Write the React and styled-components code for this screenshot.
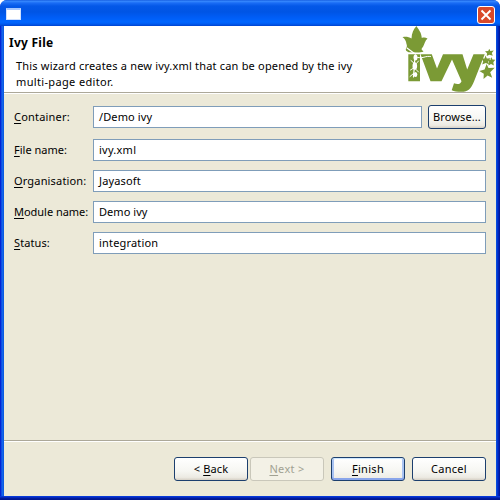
import React from "react";
import styled, { createGlobalStyle, css } from "styled-components";

const Global = createGlobalStyle`
  * { box-sizing: border-box; }
  html, body { margin: 0; padding: 0; background: #fff; overflow: hidden; }
`;

const Window = styled.div`
  width: 500px;
  height: 500px;
  display: flex;
  flex-direction: column;
  overflow: hidden;
  border-radius: 7px 7px 0 0;
  background: linear-gradient(90deg, #0019cf 0, #0831d9 1px, #166aee 2px, #0855dd 4px, #0855dd 496px, #0441d8 497px, #0029c8 498px, #00138c 500px);
  font-family: "Noto Sans", "Liberation Sans", sans-serif;
  font-size: 11px;
  color: #000;
`;

const TitleBar = styled.header`
  height: 26px;
  flex: none;
  display: flex;
  justify-content: space-between;
  align-items: flex-start;
  padding: 6px 5px 0 6px;
  background: linear-gradient(180deg, #0a4fd8 0, #3a8cff 1px, #1a6cf5 3px, #0458e8 6px, #0055e5 12px, #005cf5 17px, #0066ff 22px, #005bf0 24px, #0043cf 26px);
`;

const AppIcon = styled.span`
  width: 15px;
  height: 12px;
  margin-top: 2px;
  background: #fff;
  border: 1px solid #cfe0ff;
  border-top: 2px solid #a8c8ff;
`;

const CloseButton = styled.button`
  display: flex;
  width: 18px;
  height: 18px;
  padding: 0;
  border: 0;
  background: none;
`;

const Body = styled.main`
  flex: 1;
  display: flex;
  flex-direction: column;
  margin: 0 4px;
  background: #ece9d8;
`;

const Header = styled.section`
  height: 67px;
  flex: none;
  display: flex;
  justify-content: space-between;
  background: #fff;
  border-bottom: 1px solid #aca899;
`;

const Heading = styled.div`
  padding: 8px 0 0 5px;
`;

const Title = styled.h1`
  margin: 0;
  font-size: 12px;
  line-height: 18px;
  font-weight: 700;
  letter-spacing: 0.25px;
`;

const Description = styled.p`
  margin: 6px 0 0 7px;
  line-height: 16px;
  white-space: pre;
`;

const Spaced = styled.span`
  letter-spacing: ${(p) => p.$ls || 0}px;
`;

const Key = styled.span`
  text-decoration: underline;
  text-underline-offset: 2px;
  text-decoration-thickness: 1px;
  text-decoration-skip-ink: none;
`;

const Form = styled.form`
  flex: 1;
  padding: 11px 10px 0;
  border-top: 1px solid #fff;
`;

const Row = styled.div`
  display: flex;
  align-items: center;
  height: ${(p) => (p.$tall ? 24 : 22)}px;
  margin-bottom: ${(p) => (p.$tall ? 10 : 9)}px;
`;

const Label = styled.label`
  width: 79px;
  flex: none;
  line-height: 20px;
  white-space: pre;
  letter-spacing: ${(p) => p.$ls || 0}px;
`;

const Field = styled.div`
  flex: 1;
  height: 22px;
  padding: 0 5px;
  line-height: 20px;
  background: #fff;
  border: 1px solid #7f9db9;
  letter-spacing: ${(p) => p.$ls || 0}px;
`;

const variants = {
  normal: css`
    border-color: #1c3f6e;
    background: linear-gradient(180deg, #fff 0, #f6f6f2 60%, #eceae2 88%, #d6d0c5 100%);
  `,
  primary: css`
    border-color: #1c3f6e;
    background: linear-gradient(180deg, #fff 0, #f6f6f2 60%, #eceae2 100%);
    box-shadow: inset 0 1px #cee7ff, inset 0 -2px #89a5ea, inset 2px 0 #a9c3f2, inset -2px 0 #a9c3f2;
  `,
  disabled: css`
    border-color: #c9c7ba;
    background: #f3f1e6;
    color: #a1a192;
  `,
};

const Button = styled.button`
  flex: none;
  width: ${(p) => p.$w || 74}px;
  height: 24px;
  margin-left: ${(p) => p.$gap || 0}px;
  padding: 0 0 1px;
  font: inherit;
  letter-spacing: ${(p) => p.$ls || 0}px;
  color: #000;
  border: 1px solid;
  border-radius: 3px;
  ${(p) => variants[p.$kind || "normal"]}
`;

const Footer = styled.footer`
  height: 56px;
  flex: none;
  display: flex;
  justify-content: flex-end;
  padding: 16px 10px 0;
  border-top: 1px solid #aca899;
  box-shadow: inset 0 1px #fff;
`;

const BottomEdge = styled.div`
  height: 4px;
  flex: none;
  background: linear-gradient(180deg, #0441d8, #0831d9 1px, #001ea0 2px, #00138c);
`;

const LogoSvg = styled.svg`
  display: block;
  flex: none;
`;

const IvyLogo = () => (
  <LogoSvg width="96" height="66" viewBox="400 26 96 66" aria-label="ivy">
    <g fill="#7b9a35">
      <path d="M416.500 26c1.500 3 5 6 5.300 12 1.700-.6 3.700-.6 5.700 .5-2.500 2-2.700 5-4.300 8-.6 1.300-1.700 2-1.700 2.700l2 2.500-4.500 .8-10.500 -.3c-.8-1-2.500-1-2.700-2.500-.2-1.800 1.700-2.700 1-4.700-.8-3-.8-5.500-4.300-7.800 3-.8 6.500-.2 9 1.300.2-5 2-9.500 5-12.500z" />
      <path d="M408.300 54.300H420V81.200H408.300z" />
      <path d="M420.500 54.300H431.800L437 68.500 443 54.300H462.500L467.200 69.500 473.500 54.300H484.700L474 81.500C471 88.800 468 91.800 461.500 91.800 457.500 91.800 454 91.300 451.700 90.200L454 83.200C457.500 84.600 460.300 84.300 461.500 81.200L452 59.500 441.500 81.200H430.500z" />
      <path d="M489.300 48.800l1 2.300 3.500-.6-2 2.600 1 2.600-3.500-.9-2.500 1.200.2-2.800-2-1.900 3.200-.2z" />
      <path d="M485.500 55.500l1.300 3 4-.2-2.800 2.900 1.200 3.300-3.400-1.500-3.600 1.500 1-3.300-1.700-2.700 3 .1z" />
      <path d="M491.600 57l.8 2.500 2.900.2-2 2.500.6 3.200-2.900-1.300-2.600 1.300.5-3.200-1-2.300 2.700-.2z" />
      <path d="M486.600 64l1.900 4.100 6.200-.3-4.500 4.500 2 5.500-4.600-2.400L483.500 79l.3-5.300-4.400-2.700 5.200-1.600z" />
    </g>
    <g fill="none" stroke="#fff" strokeLinecap="round">
      <path d="M407 48c3.500 2.500 5 4 8.500 6M415.500 56c-1 5-1.500 8-1.300 11 .2 3-.7 6-.7 10" strokeWidth="1.200" />
      <path d="M415 57c4 .8 6 1 9 .2 2.500-.8 4.500-1 6.500-.7" strokeWidth="1" />
      <path d="M411 60.500c1.500 1 2.500 2 3.500 3.500M418.500 61c-1.500 2-3 3-4 5.500M410.500 70l4-2.500M418.500 72l-4-4M410 76.500l3.500-3" strokeWidth="1" />
    </g>
    <g fill="#fff">
      <ellipse cx="415.500" cy="57.500" rx="2" ry="3" />
      <ellipse cx="414.800" cy="66" rx="2.300" ry="3.800" />
      <ellipse cx="415.500" cy="74.500" rx="1.800" ry="2.500" />
    </g>
  </LogoSvg>
);

const fields = [
  ["F", "ile name:", "ivy.xml", 0.02, 0.25],
  ["O", "rganisation:", "Jayasoft", 0.17, 0.15],
  ["M", "odule name:", "Demo ivy", -0.03, 0.05],
  ["S", "tatus:", "integration", 0.1, 0.18],
];

export default function App() {
  return (
    <>
      <Global />
      <Window>
        <TitleBar>
          <AppIcon />
          <CloseButton aria-label="Close">
            <svg width="18" height="18" viewBox="0 0 18 18">
              <rect x="0.5" y="0.5" width="17" height="17" rx="2.5" fill="#d9492a" stroke="#fff" />
              <path d="M4.500 4.500l9 9M13.500 4.500l-9 9" stroke="#fff" strokeWidth="1.900" />
            </svg>
          </CloseButton>
        </TitleBar>
        <Body>
          <Header>
            <Heading>
              <Title>Ivy File</Title>
              <Description>
                <Spaced $ls={0.19}>This wizard creates a new ivy.xml that can be opened by the ivy</Spaced>
                {"\n"}
                <Spaced $ls={0.35}>multi-page editor.</Spaced>
              </Description>
            </Heading>
            <IvyLogo />
          </Header>
          <Form>
            <Row $tall>
              <Label $ls={0.2}><Key>C</Key>ontainer:</Label>
              <Field $ls={0.12}>/Demo ivy</Field>
              <Button type="button" $w={58} $gap={6} $ls={0.1}>Browse...</Button>
            </Row>
            {fields.map(([k, rest, value, labelLs, valueLs]) => (
              <Row key={k}>
                <Label $ls={labelLs}><Key>{k}</Key>{rest}</Label>
                <Field $ls={valueLs}>{value}</Field>
              </Row>
            ))}
          </Form>
          <Footer>
            <Button $ls={0.15}>{"< "}<Key>B</Key>ack</Button>
            <Button $kind="disabled" $gap={2} $ls={0.3}><Key>N</Key>{"ext >"}</Button>
            <Button $kind="primary" $gap={7} $ls={0.3}><Key>F</Key>inish</Button>
            <Button $gap={7} $ls={0.3}>Cancel</Button>
          </Footer>
        </Body>
        <BottomEdge />
      </Window>
    </>
  );
}
